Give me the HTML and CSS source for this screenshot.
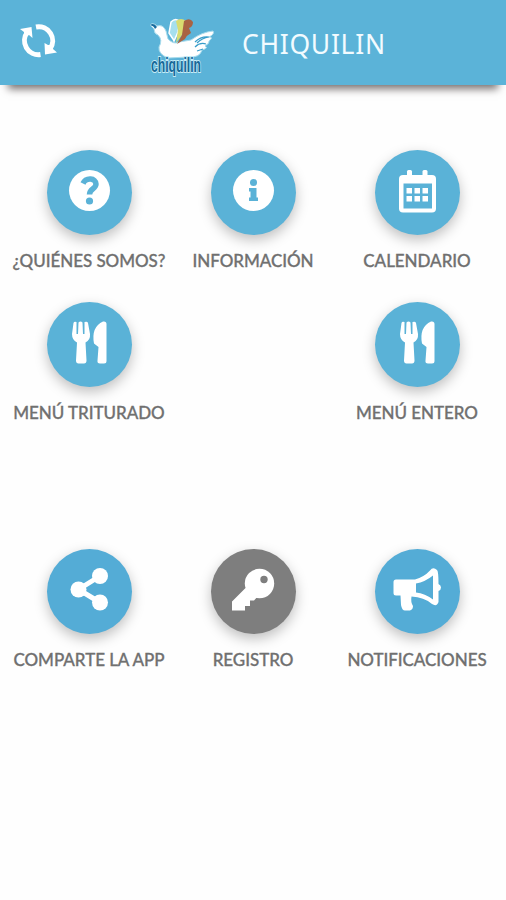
FILE: index.html
```
<!DOCTYPE html>
<html lang="es">
<head>
  <meta charset="UTF-8">
  <meta name="viewport" content="width=device-width, initial-scale=1.0">
  <title>Chiquilin</title>
  <link rel="stylesheet" href="styles.css">
</head>
<body>
  <header class="header">
    <svg class="refresh" viewBox="0 0 38 36">
      <path d="M16 4 A14 14 0 0 1 30 26" />
      <path d="M20.500 31.500 A14 14 0 0 1 7.500 9" />
      <path class="tip" d="M0 6 L11.500 4 L12.500 15 L9 12 L4 13 L4 9 Z M37 29.500 L25 31.500 L24.500 20 L28 22 L33 22 L33 26 Z" />
    </svg>
    <svg class="logo" viewBox="0 0 72 68">
      <path class="bird" d="M2 10 Q5 7 9 11 Q15 9 18 16 L20 24 Q26 30 31 27 L43 25 Q54 17 65 16 Q67 19 61 22 Q66 22 61 26 Q62 28 57 31 Q61 33 54 35 Q52 43 40 42 L20 43 Q10 39 11 32 Q15 25 10 20 Q6 19 6 14 Z" />
      <path class="child-white" d="M25 24 L21 18 L23 7 Q28 2 32 7 L30 17 L26 26 Z" />
      <path class="child-yellow" d="M29 22 L30 15 L28 6 Q33 2 38 6 L37 12 L34 20 L28 28 Z" />
      <path class="child-brown" d="M36 6 Q42 2 45 7 Q45 12 41 13 L43 18 Q39 20 37 24 L29 29 L34 20 L35 13 Z" />
      <path class="beak" d="M2 10 Q6 7 9 12 L7 14 Q6 11 2 10" />
      <path class="feather" d="M47 27 Q53 21 61 22 Q54 23 49 28 M47 32 Q52 27 58 29 M49 36 L55 34" />
      <text class="logo-name" x="3" y="57" textLength="50" lengthAdjust="spacingAndGlyphs">chiquilin</text>
    </svg>
    <h1>CHIQUILIN</h1>
  </header>

  <main>
    <div class="menu">
      <a class="item">
        <svg class="icon" viewBox="0 0 85 85">
          <circle cx="42.500" cy="40.500" r="20.500" />
          <path class="cut-line" d="M36 33.500 C39 27 49 28 49 34 C49 39 42.500 38.500 42.500 44.500" />
          <circle class="cut" cx="42.500" cy="51" r="3.600" />
        </svg>
        <span>¿QUIÉNES SOMOS?</span>
      </a>
      <a class="item">
        <svg class="icon" viewBox="0 0 85 85">
          <circle cx="42.500" cy="40.500" r="20.500" />
          <circle class="cut" cx="42.500" cy="32.500" r="3.500" />
          <path class="cut" d="M38 38 H45.500 V47.500 H47 V51 H38 V47.500 H39.500 V41.500 H38 Z" />
        </svg>
        <span>INFORMACIÓN</span>
      </a>
      <a class="item">
        <svg class="icon" viewBox="0 0 85 85">
          <rect x="24" y="25" width="37" height="37.500" rx="4" />
          <rect x="32" y="20" width="5" height="9" rx="1.500" />
          <rect x="47.500" y="20" width="5" height="9" rx="1.500" />
          <rect class="cut" x="28.500" y="33.500" width="28.500" height="25" />
          <path d="M31.500 38 h5.500 v5.500 h-5.500 Z m8 0 h5.500 v5.500 h-5.500 Z m8 0 h5.500 v5.500 h-5.500 Z m-16 8 h5.500 v5.500 h-5.500 Z m8 0 h5.500 v5.500 h-5.500 Z m8 0 h5.500 v5.500 h-5.500 Z" />
        </svg>
        <span>CALENDARIO</span>
      </a>
    </div>

    <div class="menu">
      <a class="item">
        <svg class="icon" viewBox="0 0 85 85">
          <path d="M25 32 L26.500 21 Q27 19 29.500 20 V32 H31 L31.500 20.500 Q33.500 18.500 35.500 20.500 L36 32 H37.500 V20 Q40.500 19 41 21 L43 32 Q43.500 38 38.500 40.500 L39.500 58.500 Q39.500 61.500 37 61.500 H31.500 Q29 61.500 29 58.500 L30 40.500 Q25 38 25 32 Z" />
          <path d="M56 19.500 Q59.500 19 59.500 22 V59 Q59.500 61.500 57 61.500 H53 Q50 61.500 50.500 58.500 L51.500 45 L47 41.500 Q44 25 56 19.500 Z" />
        </svg>
        <span>MENÚ TRITURADO</span>
      </a>
      <a class="item last">
        <svg class="icon" viewBox="0 0 85 85">
          <path d="M25 32 L26.500 21 Q27 19 29.500 20 V32 H31 L31.500 20.500 Q33.500 18.500 35.500 20.500 L36 32 H37.500 V20 Q40.500 19 41 21 L43 32 Q43.500 38 38.500 40.500 L39.500 58.500 Q39.500 61.500 37 61.500 H31.500 Q29 61.500 29 58.500 L30 40.500 Q25 38 25 32 Z" />
          <path d="M56 19.500 Q59.500 19 59.500 22 V59 Q59.500 61.500 57 61.500 H53 Q50 61.500 50.500 58.500 L51.500 45 L47 41.500 Q44 25 56 19.500 Z" />
        </svg>
        <span>MENÚ ENTERO</span>
      </a>
    </div>

    <div class="menu bottom">
      <a class="item">
        <svg class="icon" viewBox="0 0 85 85">
          <path class="line" d="M53 27 L31.500 40.500 L53 53.500" />
          <circle cx="53" cy="27" r="8" />
          <circle cx="31.500" cy="40.500" r="8" />
          <circle cx="53" cy="53.500" r="8" />
        </svg>
        <span>COMPARTE LA APP</span>
      </a>
      <a class="item off">
        <svg class="icon" viewBox="0 0 85 85">
          <circle cx="48.500" cy="34.500" r="14.700" />
          <path d="M34.500 39 L21 52.500 V61.500 H34 V57 H39 V51.500 H43 L48 46 Z" />
          <circle class="cut" cx="53" cy="30.500" r="3.700" />
        </svg>
        <span>REGISTRO</span>
      </a>
      <a class="item">
        <svg class="icon" viewBox="0 0 85 85">
          <path d="M21 30.500 H40 Q49 28 55 21.500 Q58 17.500 62 21 Q63.500 22 63.500 35 Q66 36 66 38.500 Q66 41 63.500 42 V53 Q62 58 57 55 Q49 48 36.500 47.500 Q35.500 53 38 57 Q38 60.500 35 61.500 H30 Q27 61.500 26 56 L25.500 46.500 H21 Q18.500 46.500 18.500 44 V33 Q18.500 30.500 21 30.500 Z" />
          <path class="cut" d="M41 34.500 Q50 33 58 26.500 V50.500 Q50 44.500 41 43.500 Z" />
        </svg>
        <span>NOTIFICACIONES</span>
      </a>
    </div>
  </main>
</body>
</html>
```
FILE: styles.css
```
body {
  margin: 0;
  background: #fefefe;
  font-family: Lato, sans-serif;
}
.header {
  display: flex;
  align-items: flex-start;
  height: 85px;
  background: #5bb3d8;
  box-shadow: 0 12px 8px -8px #777171;
}
.refresh {
  width: 38px;
  height: 36px;
  margin: 23px 0 0 20px;
  fill: none;
  stroke: white;
  stroke-width: 5;
}
.refresh .tip {
  fill: white;
  stroke: none;
}
.logo {
  width: 72px;
  height: 68px;
  margin: 15px 0 0 90px;
  overflow: visible;
}
.bird {
  fill: white;
  stroke: #a9dced;
  stroke-width: 1;
}
.child-white {
  fill: #a6dfed;
  stroke: white;
  stroke-width: 1.5;
}
.child-yellow {
  fill: #d9dc70;
}
.child-brown {
  fill: #a96343;
}
.beak {
  fill: #176b9e;
}
.feather {
  fill: none;
  stroke: #389dca;
  stroke-width: 1.2;
}
.logo-name {
  font: bold 21px "Liberation Sans", sans-serif;
  fill: #176999;
  stroke: #c5ebf6;
  stroke-width: 2;
  paint-order: stroke;
}
h1 {
  margin: 29px 0 0 22px;
  font: 26.5px/30px "Noto Sans", sans-serif;
  letter-spacing: 0.7px;
  color: #f2fbff;
}
main {
  padding: 65px 7px 0;
}
.menu {
  display: grid;
  grid-template-columns: repeat(3, 164px);
  height: 151.500px;
}
.bottom {
  margin-top: 96px;
}
.item {
  --color: #5ab2d7;
  display: flex;
  flex-direction: column;
  align-items: center;
  color: #707070;
  font-size: 17px;
  font-weight: 500;
  line-height: 20px;
  letter-spacing: -0.05px;
  white-space: nowrap;
  -webkit-text-stroke: 0.3px #707070;
}
.item.last {
  grid-column: 3;
}
.bottom .item {
  --color: #54acd6;
}
.bottom .item.off {
  --color: #7e7e7e;
}
.icon {
  width: 85px;
  height: 85px;
  margin-bottom: 16px;
  border-radius: 50%;
  background: var(--color);
  fill: white;
  box-shadow: 0 5px 13px rgba(0, 0, 0, 0.25);
}
.icon .cut {
  fill: var(--color);
}
.icon .cut-line {
  fill: none;
  stroke: var(--color);
  stroke-width: 5.5;
}
.icon .line {
  fill: none;
  stroke: white;
  stroke-width: 5;
}
```
